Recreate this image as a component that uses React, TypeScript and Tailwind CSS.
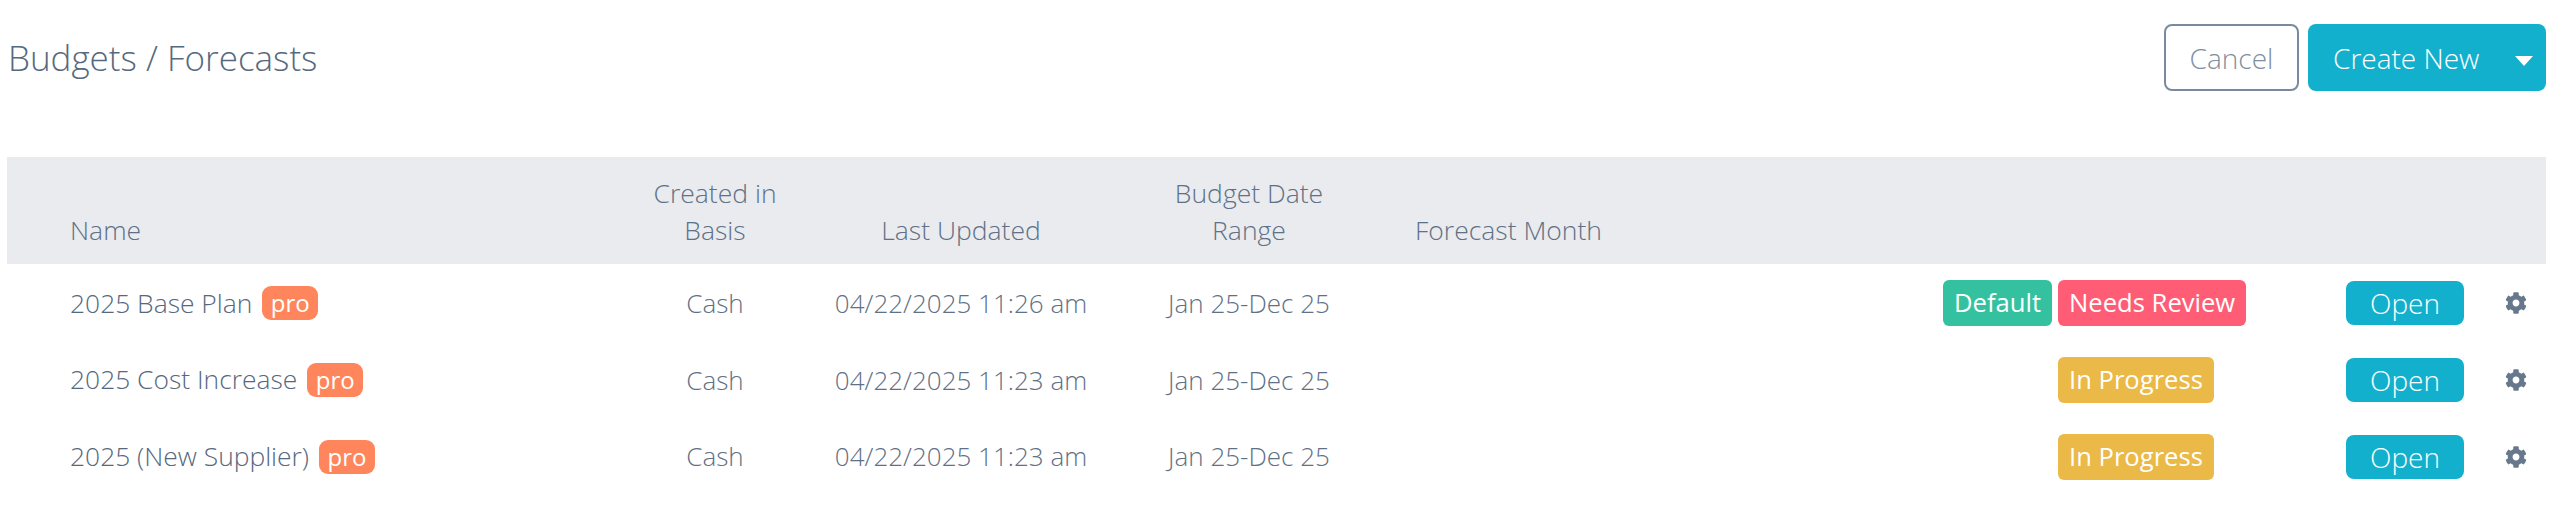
import { FaCog } from "react-icons/fa";

const font = "font-['Open_Sans',sans-serif]";
const grid = "grid grid-cols-[633px_150px_342px_234px_570px_410px_118px_1fr]";

const rows = [
  { name: "2025 Base Plan", updated: "04/22/2025 11:26 am", tags: [{ t: "Default", c: "bg-[#34c19f]" }, { t: "Needs Review", c: "bg-[#ff5d75]" }] },
  { name: "2025 Cost Increase", updated: "04/22/2025 11:23 am", tags: [{ t: "In Progress", c: "bg-[#ebb947]" }] },
  { name: "2025 (New Supplier)", updated: "04/22/2025 11:23 am", tags: [{ t: "In Progress", c: "bg-[#ebb947]" }] },
];

export default function App() {
  return (
    <div className={`${font} h-[525px] w-[2560px] bg-white text-[#5f7186] overflow-hidden`}>
      <div className="flex items-center justify-between pl-2 pr-[14px] pt-6 h-[157px] pb-[66px]">
        <h1 className="text-[35px] font-light leading-[67px] text-[#566980]">Budgets / Forecasts</h1>
        <div className="flex gap-[9px]">
          <button className="h-[67px] w-[135px] rounded-lg border-2 border-[#7a8a9e] bg-white text-[28px] font-light text-[#7f8fa2]">Cancel</button>
          <button className="flex h-[67px] w-[238px] items-center rounded-lg bg-[#12b0cd] pl-[25px] text-[28px] font-light text-white">
            Create New
            <svg className="ml-[36px] mt-[7px]" width="18" height="10" viewBox="0 0 18 10"><path d="M0 0h18L9 10z" fill="#fff" /></svg>
          </button>
        </div>
      </div>
      <div className="ml-[7px] w-[2539px]">
        <div className={`${grid} items-end h-[107px] bg-[#e9ebef] pb-[15px] text-[26.5px] leading-[37px] font-light`}>
          <div className="pl-[63px]">Name</div>
          <div className="text-center">Created in<br />Basis</div>
          <div className="text-center">Last Updated</div>
          <div className="text-center">Budget Date<br />Range</div>
          <div className="pl-[49px]">Forecast Month</div>
        </div>
        <div className="pt-[1px]">
          {rows.map((r) => (
            <div key={r.name} className={`${grid} items-center h-[76.7px] text-[26px]`}>
              <div className="flex items-center gap-[10px] pl-[63px]">
                <span className="text-[26.4px] font-light text-[#56687e]">{r.name}</span>
                <span className="flex h-[34px] w-[56px] items-center justify-center rounded-[9px] bg-[#ff865c] text-[24px] text-white">pro</span>
              </div>
              <div className="text-center font-light">Cash</div>
              <div className="text-center font-light whitespace-nowrap">{r.updated}</div>
              <div className="text-center font-light">Jan 25-Dec 25</div>
              <div />
              <div className="flex gap-[6px] pl-[7px]">
                {r.tags.length === 1 && <div className="w-[109px]" />}
                {r.tags.map((tag) => (
                  <span key={tag.t} className={`${tag.c} flex h-[46px] items-center rounded-[6px] px-[11px] text-[25.6px] text-white`}>{tag.t}</span>
                ))}
              </div>
              <button className="flex h-[44px] w-[118px] items-center justify-center rounded-lg bg-[#12b0cd] text-[28px] font-light text-white">Open</button>
              <FaCog className="ml-[41px] text-[#67788c]" size={22} />
            </div>
          ))}
        </div>
      </div>
    </div>
  );
}
